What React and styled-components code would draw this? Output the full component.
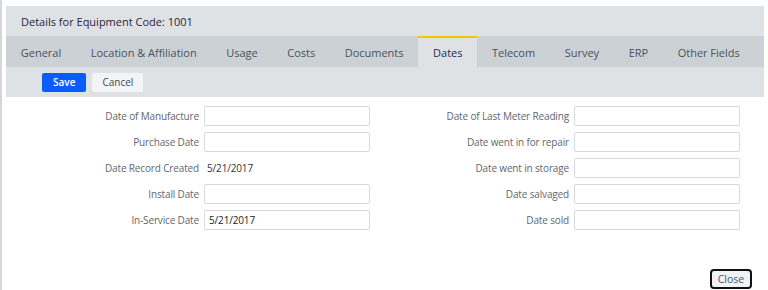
import React from "react";
import styled, { createGlobalStyle } from "styled-components";

const GlobalStyle = createGlobalStyle`
  html, body {
    margin: 0;
    padding: 0;
    background: #fff;
  }
  body {
    font-family: "Open Sans", "Liberation Sans", sans-serif;
  }
`;

const Page = styled.div`
  height: 290px;
  box-sizing: border-box;
  border-left: 2px solid #d3d7db;
  padding: 6px 4px 0 4px;
  display: flex;
  flex-direction: column;
`;

const Panel = styled.div`
  background: #dfe2e5;
`;

const Title = styled.div`
  height: 30px;
  display: flex;
  align-items: center;
  padding-left: 15px;
  font-size: 11px;
  color: #2a2240;
`;

const Tabs = styled.div`
  height: 31px;
  display: flex;
  background: #ccd1d5;
`;

const Tab = styled.div`
  display: flex;
  align-items: center;
  padding: 0 14.8px;
  font-size: 11px;
  letter-spacing: -0.02px;
  white-space: nowrap;
  color: ${(props) => (props.active ? "#1f2b48" : "#4a525c")};
  background: ${(props) => (props.active ? "#dfe2e5" : "transparent")};
  border-top: 2px solid ${(props) => (props.active ? "#f5c400" : "transparent")};
  box-sizing: border-box;
`;

const Toolbar = styled.div`
  height: 30px;
  display: flex;
  align-items: center;
  gap: 6px;
  padding-left: 36px;
`;

const Button = styled.button`
  height: 19px;
  padding: 0 ${(props) => (props.primary ? "11px" : "10px")};
  border: none;
  border-radius: 2px;
  font-family: inherit;
  font-size: 10px;
  font-weight: ${(props) => (props.primary ? 600 : 400)};
  color: ${(props) => (props.primary ? "#fff" : "#3f4750")};
  background: ${(props) => (props.primary ? "#0b5cff" : "#f3f4f6")};
`;

const Form = styled.div`
  display: flex;
  gap: 10px;
  padding-top: 9px;
`;

const Column = styled.div`
  display: grid;
  grid-template-columns: ${(props) => props.labelWidth}px 166px;
  grid-auto-rows: 20px;
  column-gap: 5px;
  row-gap: 6px;
  align-items: center;
`;

const Label = styled.div`
  text-align: right;
  font-size: 10px;
  letter-spacing: -0.15px;
  color: #62676e;
  white-space: nowrap;
`;

const Value = styled.div`
  font-size: 10px;
  letter-spacing: -0.15px;
  color: #333;
  padding-left: 3px;
`;

const Input = styled.input`
  height: 20px;
  box-sizing: border-box;
  border: 1px solid #d6dadd;
  border-radius: 2px;
  padding: 0 4px;
  font-family: inherit;
  font-size: 10px;
  letter-spacing: -0.15px;
  color: #222;
  background: #fff;
`;

const Footer = styled.div`
  margin-top: auto;
  display: flex;
  justify-content: flex-end;
  padding: 0 12px 1px 0;
`;

const CloseButton = styled.button`
  width: 42px;
  height: 20px;
  border: 2px solid #111;
  border-radius: 4px;
  background: #f1f2f4;
  font-family: inherit;
  font-size: 10.5px;
  color: #3e5577;
  padding: 0;
`;

const tabs = [
  "General",
  "Location & Affiliation",
  "Usage",
  "Costs",
  "Documents",
  "Dates",
  "Telecom",
  "Survey",
  "ERP",
  "Other Fields",
];

const leftFields = [
  { label: "Date of Manufacture", value: "" },
  { label: "Purchase Date", value: "" },
  { label: "Date Record Created", value: "5/21/2017", readOnly: true },
  { label: "Install Date", value: "" },
  { label: "In-Service Date", value: "5/21/2017" },
];

const rightFields = [
  { label: "Date of Last Meter Reading", value: "" },
  { label: "Date went in for repair", value: "" },
  { label: "Date went in storage", value: "" },
  { label: "Date salvaged", value: "" },
  { label: "Date sold", value: "" },
];

const Field = ({ label, value, readOnly }) => (
  <>
    <Label>{label}</Label>
    {readOnly ? <Value>{value}</Value> : <Input defaultValue={value} />}
  </>
);

const App = () => (
  <>
    <GlobalStyle />
    <Page>
      <Panel>
        <Title>Details for Equipment Code: 1001</Title>
        <Tabs>
          {tabs.map((tab) => (
            <Tab key={tab} active={tab === "Dates"}>
              {tab}
            </Tab>
          ))}
        </Tabs>
        <Toolbar>
          <Button primary>Save</Button>
          <Button>Cancel</Button>
        </Toolbar>
      </Panel>
      <Form>
        <Column labelWidth={193}>
          {leftFields.map((f) => (
            <Field key={f.label} {...f} />
          ))}
        </Column>
        <Column labelWidth={189}>
          {rightFields.map((f) => (
            <Field key={f.label} {...f} />
          ))}
        </Column>
      </Form>
      <Footer>
        <CloseButton>Close</CloseButton>
      </Footer>
    </Page>
  </>
);

export default App;
